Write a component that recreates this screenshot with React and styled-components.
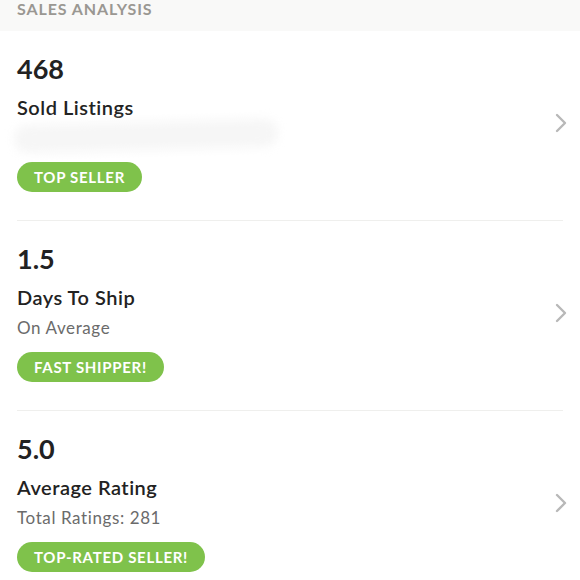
import React from "react";
import styled, { createGlobalStyle } from "styled-components";

const Global = createGlobalStyle`
  html, body { margin: 0; padding: 0; background: #ffffff; }
  body { font-family: Lato, "Open Sans", sans-serif; color: #222222; }
  * { box-sizing: border-box; }
`;

const Page = styled.div`
  width: 580px;
  height: 580px;
  overflow: hidden;
  background: #ffffff;
`;

const Header = styled.div`
  height: 31px;
  background: #f9f9f8;
  padding: 0 17px;
  display: flex;
  align-items: flex-start;
`;

const HeaderTitle = styled.span`
  font-size: 16px;
  line-height: 17px;
  font-weight: 700;
  letter-spacing: 0.9px;
  color: #9a9792;
`;

const Row = styled.div`
  display: flex;
  align-items: center;
  padding: 22px 13px 28px 17px;
`;

const Content = styled.div`
  flex: 1;
  display: flex;
  flex-direction: column;
  align-items: flex-start;
`;

const Value = styled.div`
  font-size: 27px;
  line-height: 32px;
  font-weight: 700;
  color: #222222;
`;

const Title = styled.div`
  margin-top: 10px;
  font-size: 20px;
  line-height: 24px;
  font-weight: 600;
  letter-spacing: 0.5px;
  color: #222222;
`;

const Sub = styled.div`
  margin-top: 8px;
  font-size: 17px;
  line-height: 22px;
  letter-spacing: 0.6px;
  color: #6b6b6b;
  position: relative;
  height: 22px;
`;

const Smudge = styled.span`
  position: absolute;
  left: -3px;
  top: -5px;
  width: 264px;
  height: 28px;
  background: #f6f6f6;
  border-radius: 14px;
  filter: blur(5px);
  transform: rotate(-1.5deg);
`;

const Badge = styled.span`
  margin-top: 13px;
  height: 30px;
  display: inline-flex;
  align-items: center;
  padding: 0 17px;
  border-radius: 15px;
  background: #7fc24b;
  color: #ffffff;
  font-size: 15px;
  font-weight: 700;
  letter-spacing: 0.7px;
`;

const Chevron = styled.svg`
  width: 12px;
  height: 20px;
  flex: none;
`;

const Divider = styled.div`
  height: 1px;
  margin: 0 17px;
  background: #efefed;
`;

const rows = [
  { value: "468", title: "Sold Listings", sub: null, badge: "TOP SELLER" },
  { value: "1.5", title: "Days To Ship", sub: "On Average", badge: "FAST SHIPPER!" },
  { value: "5.0", title: "Average Rating", sub: "Total Ratings: 281", badge: "TOP-RATED SELLER!" },
];

export default function App() {
  return (
    <Page>
      <Global />
      <Header>
        <HeaderTitle>SALES ANALYSIS</HeaderTitle>
      </Header>
      {rows.map((r, i) => (
        <React.Fragment key={r.value}>
          {i > 0 && <Divider />}
          <Row>
            <Content>
              <Value>{r.value}</Value>
              <Title>{r.title}</Title>
              <Sub>{r.sub ? r.sub : <Smudge />}</Sub>
              <Badge>{r.badge}</Badge>
            </Content>
            <Chevron viewBox="0 0 12 20">
              <path d="M2 2 L10 10 L2 18" fill="none" stroke="#b8b8b8" strokeWidth="2.4" strokeLinecap="round" strokeLinejoin="round" />
            </Chevron>
          </Row>
        </React.Fragment>
      ))}
    </Page>
  );
}
